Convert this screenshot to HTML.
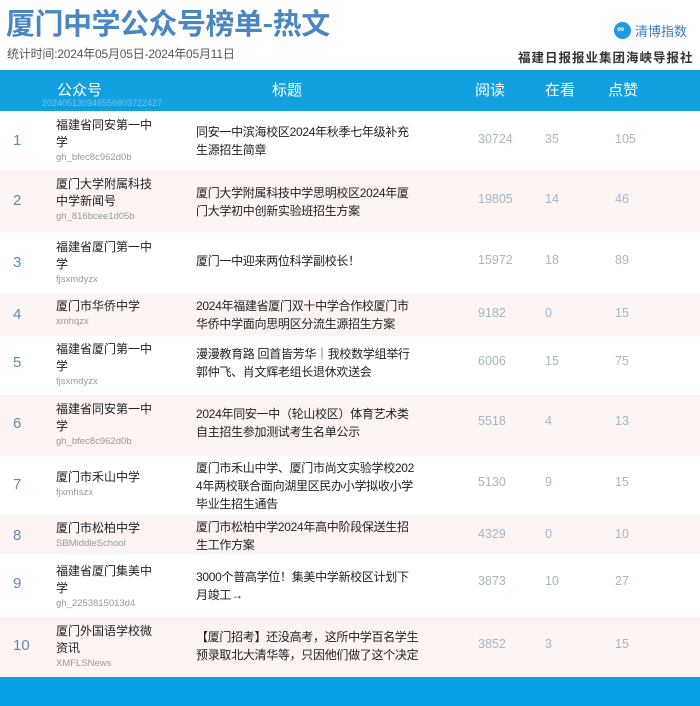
<!DOCTYPE html>
<html><head><meta charset="utf-8"><style>
*{margin:0;padding:0;box-sizing:border-box}
body{width:700px;height:706px;background:#fff;position:relative;overflow:hidden;font-family:"Liberation Sans","Noto Sans CJK SC",sans-serif;color:#222}
.abs{position:absolute;white-space:nowrap}
h1{position:absolute;left:6px;top:4px;font-size:29px;font-weight:bold;color:#4a86c2;letter-spacing:-0.5px;font-family:"Noto Sans CJK SC",sans-serif;line-height:36px}
.sub{left:7px;top:45px;font-size:12px;color:#555;letter-spacing:-0.2px}
.hdr{position:absolute;left:0;top:70px;width:700px;height:41px;background:#13a0e0}
.hdr span{position:absolute;top:9px;color:#fff;font-size:15px}
.row{position:absolute;left:0;width:700px}
.pk{background:#fcf3f3}
.rk{position:absolute;left:13px;font-size:15px;color:#5f8cab}
.nm{position:absolute;left:56px;font-size:12px;line-height:17px;width:100px;white-space:normal}
.id{display:block;font-size:9.5px;color:#999;line-height:14px}
.tt{position:absolute;left:196px;font-size:12px;line-height:18px;white-space:nowrap;letter-spacing:-0.3px}
.n{position:absolute;font-size:12.5px;color:#a8b6c2}
.foot{position:absolute;left:0;top:677px;width:700px;height:29px;background:#06a0e3}
</style></head><body>
<h1>厦门中学公众号榜单-热文</h1>
<div class="abs sub">统计时间:2024年05月05日-2024年05月11日</div>
<div class="abs" style="left:614px;top:22px;width:17px;height:17px;border-radius:50%;background:#1d9be0"></div>
<div class="abs" style="left:617px;top:24px;color:#fff;font-size:10px;font-weight:bold">∞</div>
<div class="abs" style="left:635px;top:21px;font-size:13px;color:#3a7bbf">清博指数</div>
<div class="abs" style="left:518px;top:47px;font-size:12.5px;font-weight:bold;color:#333;letter-spacing:1px">福建日报报业集团海峡导报社</div>
<div class="hdr"><span style="left:57px">公众号</span><span style="left:272px">标题</span><span style="left:475px">阅读</span><span style="left:545px">在看</span><span style="left:608px">点赞</span>
<span style="left:42px;top:28px;font-size:9px;color:#6cc3ee">202405130946556803722427</span></div>

<div class="row" style="top:111px;height:59px"><span class="rk" style="top:21px">1</span><div class="nm" style="top:6px">福建省同安第一中学<span class="id">gh_bfec8c962d0b</span></div><div class="tt" style="top:12px">同安一中滨海校区2024年秋季七年级补充<br>生源招生简章</div><span class="n" style="left:478px;top:21px">30724</span><span class="n" style="left:545px;top:21px">35</span><span class="n" style="left:615px;top:21px">105</span></div>
<div class="row pk" style="top:170px;height:62px"><span class="rk" style="top:22px">2</span><div class="nm" style="top:6px">厦门大学附属科技中学新闻号<span class="id">gh_816bcee1d05b</span></div><div class="tt" style="top:14px">厦门大学附属科技中学思明校区2024年厦<br>门大学初中创新实验班招生方案</div><span class="n" style="left:478px;top:22px">19805</span><span class="n" style="left:545px;top:22px">14</span><span class="n" style="left:615px;top:22px">46</span></div>
<div class="row" style="top:232px;height:61px"><span class="rk" style="top:22px">3</span><div class="nm" style="top:7px">福建省厦门第一中学<span class="id">fjsxmdyzx</span></div><div class="tt" style="top:20px">厦门一中迎来两位科学副校长！</div><span class="n" style="left:478px;top:21px">15972</span><span class="n" style="left:545px;top:21px">18</span><span class="n" style="left:615px;top:21px">89</span></div>
<div class="row pk" style="top:293px;height:43px"><span class="rk" style="top:13px">4</span><div class="nm" style="top:5px">厦门市华侨中学<span class="id">xmhqzx</span></div><div class="tt" style="top:4px">2024年福建省厦门双十中学合作校厦门市<br>华侨中学面向思明区分流生源招生方案</div><span class="n" style="left:478px;top:13px">9182</span><span class="n" style="left:545px;top:13px">0</span><span class="n" style="left:615px;top:13px">15</span></div>
<div class="row" style="top:336px;height:59px"><span class="rk" style="top:18px">5</span><div class="nm" style="top:5px">福建省厦门第一中学<span class="id">fjsxmdyzx</span></div><div class="tt" style="top:9px">漫漫教育路 回首皆芳华｜我校数学组举行<br>郭仲飞、肖文辉老组长退休欢送会</div><span class="n" style="left:478px;top:18px">6006</span><span class="n" style="left:545px;top:18px">15</span><span class="n" style="left:615px;top:18px">75</span></div>
<div class="row pk" style="top:395px;height:61px"><span class="rk" style="top:20px">6</span><div class="nm" style="top:6px">福建省同安第一中学<span class="id">gh_bfec8c962d0b</span></div><div class="tt" style="top:10px">2024年同安一中（轮山校区）体育艺术类<br>自主招生参加测试考生名单公示</div><span class="n" style="left:478px;top:19px">5518</span><span class="n" style="left:545px;top:19px">4</span><span class="n" style="left:615px;top:19px">13</span></div>
<div class="row" style="top:456px;height:59px"><span class="rk" style="top:20px">7</span><div class="nm" style="top:13px">厦门市禾山中学<span class="id">fjxmhszx</span></div><div class="tt" style="top:3px">厦门市禾山中学、厦门市尚文实验学校202<br>4年两校联合面向湖里区民办小学拟收小学<br>毕业生招生通告</div><span class="n" style="left:478px;top:19px">5130</span><span class="n" style="left:545px;top:19px">9</span><span class="n" style="left:615px;top:19px">15</span></div>
<div class="row pk" style="top:515px;height:39px"><span class="rk" style="top:12px">8</span><div class="nm" style="top:5px">厦门市松柏中学<span class="id">SBMiddleSchool</span></div><div class="tt" style="top:3px">厦门市松柏中学2024年高中阶段保送生招<br>生工作方案</div><span class="n" style="left:478px;top:12px">4329</span><span class="n" style="left:545px;top:12px">0</span><span class="n" style="left:615px;top:12px">10</span></div>
<div class="row" style="top:554px;height:63px"><span class="rk" style="top:21px">9</span><div class="nm" style="top:9px">福建省厦门集美中学<span class="id">gh_2253815013d4</span></div><div class="tt" style="top:14px">3000个普高学位！集美中学新校区计划下<br>月竣工→</div><span class="n" style="left:478px;top:20px">3873</span><span class="n" style="left:545px;top:20px">10</span><span class="n" style="left:615px;top:20px">27</span></div>
<div class="row pk" style="top:617px;height:60px"><span class="rk" style="top:20px">10</span><div class="nm" style="top:6px">厦门外国语学校微资讯<span class="id">XMFLSNews</span></div><div class="tt" style="top:11px">【厦门招考】还没高考，这所中学百名学生<br>预录取北大清华等，只因他们做了这个决定</div><span class="n" style="left:478px;top:20px">3852</span><span class="n" style="left:545px;top:20px">3</span><span class="n" style="left:615px;top:20px">15</span></div>
<div class="foot"></div>
</body></html>
